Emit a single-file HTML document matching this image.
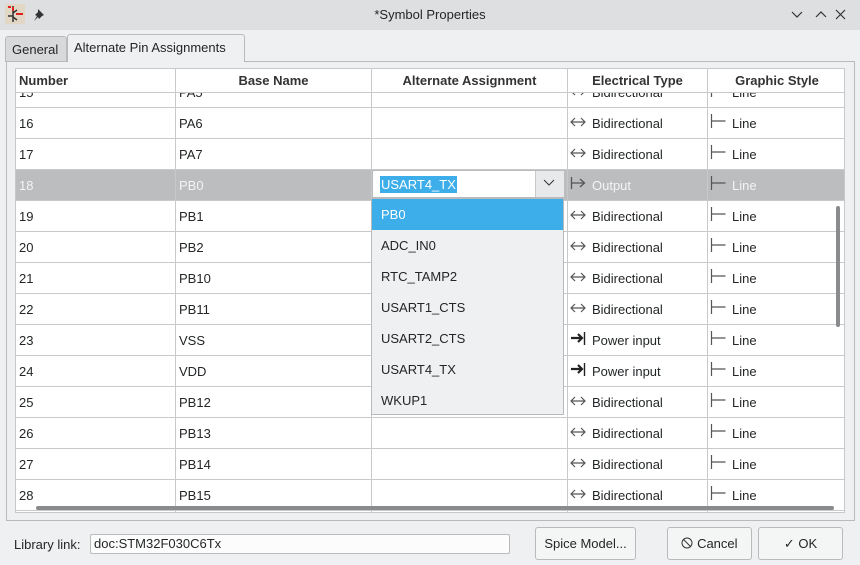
<!DOCTYPE html>
<html><head><style>
*{margin:0;padding:0;box-sizing:border-box}
body{width:860px;height:565px;background:#eff0f1;font-family:"Liberation Sans",sans-serif;font-size:13px;color:#232627;position:relative;overflow:hidden}
.abs{position:absolute}
.title{left:0;top:0;width:860px;height:30px;background:#dedfe0}
.tab{position:absolute;border:1px solid #b9babb;border-bottom:none;border-radius:3px 3px 0 0;height:27px;line-height:26px;padding:0 6px}
.panel{left:6px;top:61px;width:849px;height:460px;border:1px solid #b9babb;background:#eff0f1}
.tbl{left:15px;top:68px;width:830px;height:445px;background:#fff;border:1px solid #c8c9ca;overflow:hidden}
.hdr{position:absolute;top:0;height:24px;line-height:24px;font-weight:bold;text-align:center;border-right:1px solid #c8c9ca;border-bottom:1px solid #c8c9ca;background:#fff;z-index:3;color:#333}
.row{position:absolute;left:0;width:830px;height:31px;border-bottom:1px solid #c8c9ca}
.c{position:absolute;top:0;height:31px;line-height:31px;border-right:1px solid #c8c9ca;padding-left:3px;white-space:nowrap}
.sel{background:#bcbdbf;color:#f4f4f4}
.ic{display:inline-block;width:22px;height:31px;vertical-align:top}
.ic svg{margin-top:5px}
.btn{position:absolute;border:1px solid #b9babb;border-radius:3px;background:#f4f5f5;text-align:center;line-height:31px;height:33px}
</style></head><body>
<div class="abs title">
 <svg class="abs" style="left:5px;top:4px" width="20" height="20"><rect width="20" height="20" rx="2" fill="#e2d7c4"/><path d="M8 2v16M3 12h5M8 9l4-3M8 13l4 3" stroke="#333" stroke-width="1.5" fill="none"/><rect x="11" y="9" width="7" height="2" fill="#d22"/><rect x="3" y="2" width="3" height="2" fill="#d22"/><rect x="7" y="3" width="2" height="4" fill="#d22"/></svg>
 <svg class="abs" style="left:32px;top:7px" width="14" height="14"><path d="M6 2l6 6-2 1-3 3-1-2-4 4 3-5-2-1 3-3z" fill="#333"/></svg>
 <div class="abs" style="left:0;width:860px;top:7px;text-align:center">*Symbol Properties</div>
 <svg class="abs" style="left:790px;top:8px" width="60" height="14" stroke="#333" fill="none" stroke-width="1.2"><path d="M2 4l5 5 5-5M26 9l5-5 5 5M46 2l9 9M55 2l-9 9"/></svg>
</div>
<div class="tab" style="left:5px;width:62px;background:#d8d9da;top:36px;height:26px">General</div>
<div class="tab" style="left:67px;top:34px;width:178px;background:#eff0f1;z-index:2;height:28px">Alternate Pin Assignments</div>
<div class="abs panel"></div>
<div class="abs tbl">
 <div class="hdr" style="left:0;width:160px;text-align:left;padding-left:3px">Number</div>
 <div class="hdr" style="left:160px;width:196px">Base Name</div>
 <div class="hdr" style="left:356px;width:196px">Alternate Assignment</div>
 <div class="hdr" style="left:552px;width:140px">Electrical Type</div>
 <div class="hdr" style="left:692px;width:138px;border-right:none">Graphic Style</div>
 <div id="rows"></div>
 <div class="abs" style="left:20px;top:437px;width:798px;height:4px;background:#8a8b8c;border-radius:2px;z-index:4"></div>
 <div class="abs" style="left:820px;top:137px;width:4px;height:121px;background:#8a8b8c;border-radius:2px;z-index:4"></div>
</div>
<script>
var BI='<svg width="16" height="12"><path d="M1 6h14M5 2L1 6l4 4M11 2l4 4-4 4" stroke="#555" fill="none" stroke-width="1.2"/></svg>';
var OUT='<svg width="16" height="14"><path d="M1.5 1v12M1.5 7h13M10 3l4.5 4-4.5 4" stroke="#555" fill="none" stroke-width="1.3"/></svg>';
var PW='<svg width="16" height="14"><path d="M1 7h11M8 3l4 4-4 4" stroke="#222" fill="none" stroke-width="2.2"/><path d="M14.5 1v13" stroke="#222" stroke-width="1.4"/></svg>';
var LN='<svg width="16" height="14"><path d="M1.5 0v14M1.5 7h14" stroke="#555" fill="none" stroke-width="1.2"/></svg>';
var d=[["15","PA5","b"],["16","PA6","b"],["17","PA7","b"],["18","PB0","o"],["19","PB1","b"],["20","PB2","b"],["21","PB10","b"],["22","PB11","b"],["23","VSS","p"],["24","VDD","p"],["25","PB12","b"],["26","PB13","b"],["27","PB14","b"],["28","PB15","b"],["29","","b"]];
var h="";d.forEach(function(r,i){var t=8+i*31;var s=r[2]=="o";
var et=r[2]=="b"?'<span class="ic">'+BI+'</span>Bidirectional':r[2]=="o"?'<span class="ic">'+OUT+'</span>Output':'<span class="ic">'+PW+'</span>Power input';
h+='<div class="row'+(s?' sel':'')+'" style="top:'+t+'px"><div class="c" style="left:0;width:160px">'+r[0]+'</div><div class="c" style="left:160px;width:196px">'+r[1]+'</div><div class="c" style="left:356px;width:196px"></div><div class="c" style="left:552px;width:140px;padding-left:2px">'+et+'</div><div class="c" style="left:692px;width:138px;border:none;padding-left:2px"><span class="ic">'+LN+'</span>Line</div></div>';});
document.getElementById("rows").innerHTML=h;
</script>
<div class="abs" style="left:372px;top:170px;width:192px;height:28px;background:#fff;border:1px solid #b9babb;border-radius:2px">
 <span class="abs" style="left:7px;top:5px;background:#3daee9;color:#fff;line-height:17px;padding:0 1px">USART4_TX</span>
 <div class="abs" style="left:162px;top:0;width:29px;height:26px;background:#e8e9ea;border-left:1px solid #c8c9ca"></div>
 <svg class="abs" style="left:170px;top:8px" width="12" height="8"><path d="M1 1l5 5 5-5" stroke="#333" fill="none"/></svg>
</div>
<div class="abs" style="left:371px;top:198px;width:193px;height:217px;background:#eff0f1;border:1px solid #b9babb;z-index:5">
 <div style="height:31px;line-height:31px;padding-left:9px;background:#3daee9;color:#fff">PB0</div>
 <div style="height:31px;line-height:31px;padding-left:9px">ADC_IN0</div>
 <div style="height:31px;line-height:31px;padding-left:9px">RTC_TAMP2</div>
 <div style="height:31px;line-height:31px;padding-left:9px">USART1_CTS</div>
 <div style="height:31px;line-height:31px;padding-left:9px">USART2_CTS</div>
 <div style="height:31px;line-height:31px;padding-left:9px">USART4_TX</div>
 <div style="height:31px;line-height:31px;padding-left:9px">WKUP1</div>
</div>
<div class="abs" style="left:14px;top:537px">Library link:</div>
<div class="abs" style="left:90px;top:534px;width:420px;height:20px;background:#fcfcfc;border:1px solid #b9babb;border-radius:2px;line-height:18px;padding-left:3px">doc:STM32F030C6Tx</div>
<div class="btn" style="left:535px;top:527px;width:101px">Spice Model...</div>
<div class="btn" style="left:667px;top:527px;width:85px"><svg width="12" height="12" style="vertical-align:-1px"><circle cx="6" cy="6" r="5" stroke="#333" fill="none"/><path d="M2.5 2.5l7 7" stroke="#333"/></svg> Cancel</div>
<div class="btn" style="left:758px;top:527px;width:85px">&#x2713; OK</div>
</body></html>
